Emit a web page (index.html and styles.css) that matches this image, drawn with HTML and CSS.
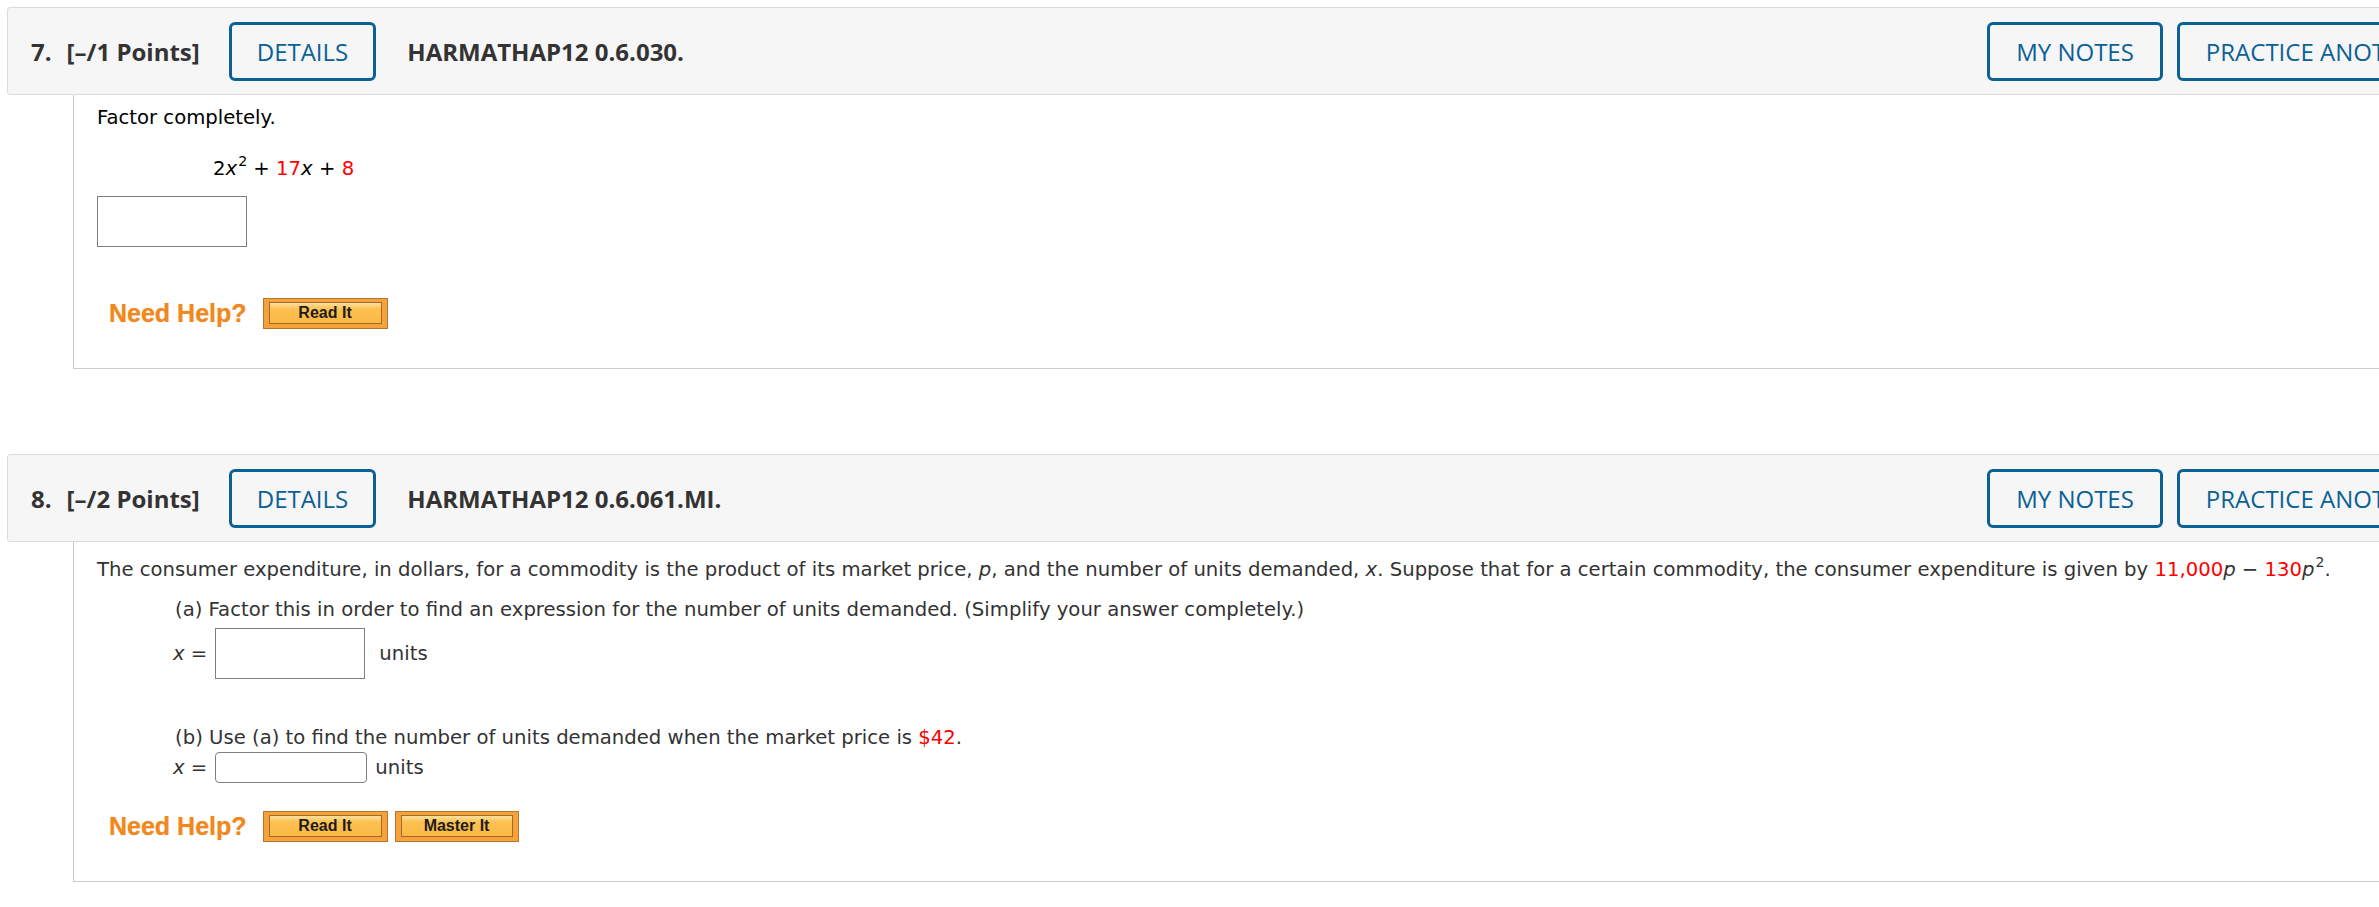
FILE: index.html
```html
<!DOCTYPE html>
<html lang="en">
<head>
<meta charset="utf-8">
<title>Questions</title>
<link rel="stylesheet" href="styles.css">
</head>
<body>
<main class="page">
  <section class="question">
    <header class="qhead">
      <div class="qhead-left">
        <span class="qnum">7.</span>
        <span class="qpoints">[–/1 Points]</span>
        <button class="outline-btn details">DETAILS</button>
        <span class="qcode">HARMATHAP12 0.6.030.</span>
      </div>
      <div class="qhead-right">
        <button class="outline-btn">MY NOTES</button>
        <button class="outline-btn">PRACTICE ANOTHER</button>
      </div>
    </header>
    <div class="qbody q7">
      <p class="prompt">Factor completely.</p>
      <div class="math-line">2<i>x</i><sup>2</sup> + <span class="red">17</span><i>x</i> + <span class="red">8</span></div>
      <input class="answer big" type="text" aria-label="answer">
      <div class="help-row">
        <span class="need-help">Need Help?</span>
        <button class="help-btn read"><span>Read It</span></button>
      </div>
    </div>
  </section>

  <section class="question">
    <header class="qhead">
      <div class="qhead-left">
        <span class="qnum">8.</span>
        <span class="qpoints">[–/2 Points]</span>
        <button class="outline-btn details">DETAILS</button>
        <span class="qcode">HARMATHAP12 0.6.061.MI.</span>
      </div>
      <div class="qhead-right">
        <button class="outline-btn">MY NOTES</button>
        <button class="outline-btn">PRACTICE ANOTHER</button>
      </div>
    </header>
    <div class="qbody q8">
      <p class="prompt">The consumer expenditure, in dollars, for a commodity is the product of its market price, <i>p</i>, and the number of units demanded, <i>x</i>. Suppose that for a certain commodity, the consumer expenditure is given by <span class="red">11,000</span><i>p</i> − <span class="red">130</span><i>p</i><sup>2</sup>.</p>
      <p class="part part-a">(a) Factor this in order to find an expression for the number of units demanded. (Simplify your answer completely.)</p>
      <div class="answer-row row-a">
        <span class="lhs"><i>x</i> =</span>
        <input class="answer big" type="text" aria-label="answer a">
        <span class="unit">units</span>
      </div>
      <p class="part part-b">(b) Use (a) to find the number of units demanded when the market price is <span class="red">$42</span>.</p>
      <div class="answer-row row-b">
        <span class="lhs"><i>x</i> =</span>
        <input class="answer small" type="text" aria-label="answer b">
        <span class="unit">units</span>
      </div>
      <div class="help-row">
        <span class="need-help">Need Help?</span>
        <button class="help-btn read"><span>Read It</span></button>
        <button class="help-btn master"><span>Master It</span></button>
      </div>
    </div>
  </section>
</main>
</body>
</html>
```

FILE: styles.css
```css
html, body {
  margin: 0;
  padding: 0;
  overflow: hidden;
  background: #ffffff;
}

body {
  font-family: "DejaVu Sans", Verdana, sans-serif;
}

.page {
  width: 2468px;
  padding: 7px 0 0 7px;
}

.question + .question {
  margin-top: 85px;
}

/* ---------- header bar ---------- */
.qhead {
  display: flex;
  align-items: center;
  justify-content: space-between;
  background: #f6f6f6;
  border: 1px solid #dcdcdc;
  border-radius: 3px;
  padding: 14px 14px 13px 23px;
  font-family: "Open Sans", sans-serif;
  font-size: 24px;
  color: #333333;
}

.qhead-left {
  display: flex;
  align-items: center;
}

.qnum {
  font-weight: 700;
}

.qpoints {
  font-weight: 700;
  margin-left: 15px;
}

.qcode {
  margin-left: 31px;
  font-weight: 700;
}

.qhead-right {
  display: flex;
  gap: 14px;
}

.outline-btn {
  font: 400 24px/33px "Open Sans", sans-serif;
  color: #0a6195;
  background: transparent;
  border: 3px solid #0a6195;
  border-radius: 6px;
  padding: 10px 26px;
  margin: 0;
  cursor: pointer;
}

.outline-btn.details {
  margin-left: 29px;
  padding: 10px 25px;
}

/* ---------- question body ---------- */
.qbody {
  margin-left: 66px;
  border-left: 1px solid #cccccc;
  border-bottom: 1px solid #cccccc;
  padding: 9px 0 39px 23px;
  font-size: 19.65px;
  line-height: 27px;
}

.q7 {
  color: #000000;
}

.q8 {
  color: #333333;
  padding-top: 14px;
}

.prompt {
  margin: 0;
}

.red {
  color: #ff0000;
}

i {
  font-style: italic;
}

sup {
  font-size: 72%;
  line-height: 0;
  vertical-align: 0.65em;
  margin-left: 1px;
}

.math-line {
  margin: 24px 0 0 116px;
}

.answer {
  display: block;
  box-sizing: border-box;
  margin: 0;
  padding: 0;
  background: #ffffff;
  border: 1px solid #7f7f7f;
  font: inherit;
}

.answer.big {
  width: 150px;
  height: 51px;
  border-radius: 0;
}

.answer.small {
  width: 152px;
  height: 31px;
  border-radius: 4px;
}

.q7 .answer {
  margin-top: 14px;
}

.part {
  margin: 0 0 0 78px;
}

.part-a {
  margin-top: 13px;
}

.part-b {
  margin-top: 45px;
}

.answer-row {
  display: flex;
  align-items: center;
  margin-left: 76px;
}

.row-a {
  margin-top: 5px;
}

.row-b {
  margin-top: 1px;
}

.lhs {
  margin-right: 8px;
}

.row-a .unit {
  margin-left: 14px;
}

.row-b .unit {
  margin-left: 8px;
}

/* ---------- need help ---------- */
.help-row {
  display: flex;
  align-items: center;
  margin-left: 12px;
}

.q7 .help-row {
  margin-top: 51px;
}

.q8 .help-row {
  margin-top: 28px;
}

.need-help {
  font: 700 25px/31px "Liberation Sans", Arial, sans-serif;
  color: #f0871f;
  text-shadow: 0 0 1px rgba(240, 135, 31, 0.55);
  margin-right: 16px;
}

.help-btn {
  box-sizing: border-box;
  display: flex;
  height: 31px;
  margin: 0;
  padding: 3px 5px 4px;
  border: 1px solid #b5762e;
  background: #f6a23a;
  cursor: pointer;
}

.help-btn span {
  flex: 1;
  border: 1px solid #a06b2e;
  background: linear-gradient(#fde0a0 0, #fcc151 30%, #fbb843 100%);
  font: 700 16px/20px "Liberation Sans", Arial, sans-serif;
  color: #1c1c1c;
  text-align: center;
}

.read {
  width: 125px;
}

.master {
  width: 124px;
  margin-left: 7px;
}
```
